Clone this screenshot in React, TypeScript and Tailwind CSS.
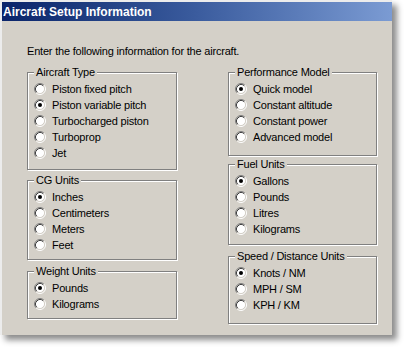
import React from 'react';

type GroupProps = {
  label: string;
  items: string[];
  checked: number;
  height: string;
  className?: string;
};

function Radio({ on }: { on: boolean }) {
  return (
    <svg width="12" height="12" viewBox="0 0 12 12" className="shrink-0">
      <circle cx="6" cy="6" r="4.5" fill="#ffffff" />
      <path d="M2.11 9.89 A5.5 5.5 0 0 1 9.89 2.11" fill="none" stroke="#808080" strokeWidth="1" />
      <path d="M9.89 2.11 A5.5 5.5 0 0 1 2.11 9.89" fill="none" stroke="#ffffff" strokeWidth="1" />
      <path d="M2.82 9.18 A4.5 4.5 0 0 1 9.18 2.82" fill="none" stroke="#404040" strokeWidth="1" />
      <path d="M9.18 2.82 A4.5 4.5 0 0 1 2.82 9.18" fill="none" stroke="#d4d0c8" strokeWidth="1" />
      {on && <circle cx="6" cy="6" r="2" fill="#000000" />}
    </svg>
  );
}

function Group({ label, items, checked, height, className = '' }: GroupProps) {
  return (
    <div
      className={`relative border border-[#808080] shadow-[1px_1px_0_#ffffff,inset_1px_1px_0_#ffffff] ${height} ${className}`}
    >
      <span className="absolute -top-[7px] left-[6px] bg-[#d4d0c8] px-[2px] leading-[13px]">
        {label}
      </span>
      <div className="flex flex-col pl-[6px] pt-[8px]">
        {items.map((item, i) => (
          <div key={item} className="flex h-[16px] items-center gap-[6px]">
            <Radio on={i === checked} />
            <span className="leading-[13px]">{item}</span>
          </div>
        ))}
      </div>
    </div>
  );
}

export default function App() {
  return (
    <div className="min-h-screen bg-white">
      <div
        className="flex h-[335px] w-[392px] flex-col border-l-2 border-t-2 border-[#ececec] bg-[#d4d0c8] text-[11px] tracking-[-0.2px] text-black shadow-[5px_5px_6px_rgba(0,0,0,0.45)]"
        style={{ fontFamily: '"Liberation Sans", Arial, sans-serif' }}
      >
        {/* Title bar */}
        <div className="flex h-[19px] items-center bg-gradient-to-r from-[#0a246a] via-[#3b5c9e] to-[#7b9bd3] pl-[1px]">
          <span className="text-[12px] font-bold leading-none tracking-normal text-white">Aircraft Setup Information</span>
        </div>

        <div className="pl-[25px] pt-[24px]">
          <p className="leading-[13px]">Enter the following information for the aircraft.</p>

          <div className="mt-[14px] flex gap-[51px]">
            <div className="flex w-[150px] shrink-0 flex-col">
              <Group
                label="Aircraft Type"
                items={['Piston fixed pitch', 'Piston variable pitch', 'Turbocharged piston', 'Turboprop', 'Jet']}
                checked={1}
                height="h-[98px]"
              />
              <Group
                label="CG Units"
                items={['Inches', 'Centimeters', 'Meters', 'Feet']}
                checked={0}
                height="h-[80px]"
                className="mt-[10px]"
              />
              <Group
                label="Weight Units"
                items={['Pounds', 'Kilograms']}
                checked={0}
                height="h-[48px]"
                className="mt-[11px]"
              />
            </div>

            <div className="flex w-[149px] shrink-0 flex-col">
              <Group
                label="Performance Model"
                items={['Quick model', 'Constant altitude', 'Constant power', 'Advanced model']}
                checked={0}
                height="h-[84px]"
              />
              <Group
                label="Fuel Units"
                items={['Gallons', 'Pounds', 'Litres', 'Kilograms']}
                checked={0}
                height="h-[81px]"
                className="mt-[8px]"
              />
              <Group
                label="Speed / Distance Units"
                items={['Knots / NM', 'MPH / SM', 'KPH / KM']}
                checked={0}
                height="h-[68px]"
                className="mt-[11px]"
              />
            </div>
          </div>
        </div>
      </div>
    </div>
  );
}
